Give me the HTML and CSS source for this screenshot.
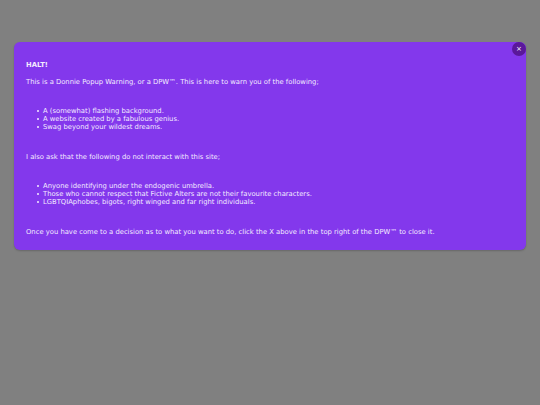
FILE: index.html
```html
<!DOCTYPE html>
<html>
<head>
<meta charset="utf-8">
<link rel="stylesheet" href="styles.css">
</head>
<body>
<div class="overlay">
  <div class="modal">
    <button class="close">×</button>
    <p class="title">HALT!</p>
    <p class="intro">This is a Donnie Popup Warning, or a DPW™. This is here to warn you of the following;</p>
    <ul class="list">
      <li>A (somewhat) flashing background.</li>
      <li>A website created by a fabulous genius.</li>
      <li>Swag beyond your wildest dreams.</li>
    </ul>
    <p class="para">I also ask that the following do not interact with this site;</p>
    <ul class="list">
      <li>Anyone identifying under the endogenic umbrella.</li>
      <li>Those who cannot respect that Fictive Alters are not their favourite characters.</li>
      <li>LGBTQIAphobes, bigots, right winged and far right individuals.</li>
    </ul>
    <p class="para">Once you have come to a decision as to what you want to do, click the X above in the top right of the DPW™ to close it.</p>
  </div>
</div>
</body>
</html>
```
FILE: styles.css
```css
html, body {
  margin: 0;
  padding: 0;
  background: #808080;
  width: 540px;
  height: 405px;
  overflow: hidden;
}
.overlay {
  padding: 42px 14px 0 14px;
}
.modal {
  position: relative;
  background: #8338ec;
  border-radius: 6px;
  padding: 19px 12px 14px 12px;
  color: #f3ebff;
  font-family: "DejaVu Sans", Verdana, sans-serif;
  font-size: 6.8px;
  line-height: 8px;
  box-shadow: 0 1px 2px rgba(0,0,0,0.2);
}
.modal p, .modal ul {
  margin: 0;
}
.title {
  font-weight: bold;
}
.intro {
  margin-top: 9px !important;
}
.list {
  margin-top: 21px !important;
  padding-left: 17px;
  list-style: none;
}
.list li::before {
  content: "";
  display: inline-block;
  width: 2px;
  height: 2px;
  background: #f3ebff;
  border-radius: 1px;
  margin: 0 4px 0 -6px;
  vertical-align: 1px;
}
.para {
  margin-top: 22px !important;
}
.close {
  position: absolute;
  top: 0;
  right: 0;
  width: 14px;
  height: 14px;
  border-radius: 50%;
  border: none;
  padding: 0;
  background: #5a189a;
  color: #ffffff;
  font-family: "DejaVu Sans", sans-serif;
  font-size: 7px;
  line-height: 14px;
  text-align: center;
}
```
